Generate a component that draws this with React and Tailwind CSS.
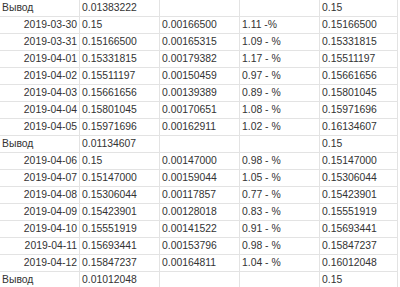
const rows = [
  ['Вывод', '0.01383222', '', '', '0.15', true],
  ['2019-03-30', '0.15', '0.00166500', '1.11 -%', '0.15166500'],
  ['2019-03-31', '0.15166500', '0.00165315', '1.09 - %', '0.15331815'],
  ['2019-04-01', '0.15331815', '0.00179382', '1.17 - %', '0.15511197'],
  ['2019-04-02', '0.15511197', '0.00150459', '0.97 - %', '0.15661656'],
  ['2019-04-03', '0.15661656', '0.00139389', '0.89 - %', '0.15801045'],
  ['2019-04-04', '0.15801045', '0.00170651', '1.08 - %', '0.15971696'],
  ['2019-04-05', '0.15971696', '0.00162911', '1.02 - %', '0.16134607'],
  ['Вывод', '0.01134607', '', '', '0.15', true],
  ['2019-04-06', '0.15', '0.00147000', '0.98 - %', '0.15147000'],
  ['2019-04-07', '0.15147000', '0.00159044', '1.05 - %', '0.15306044'],
  ['2019-04-08', '0.15306044', '0.00117857', '0.77 - %', '0.15423901'],
  ['2019-04-09', '0.15423901', '0.00128018', '0.83 - %', '0.15551919'],
  ['2019-04-10', '0.15551919', '0.00141522', '0.91 - %', '0.15693441'],
  ['2019-04-11', '0.15693441', '0.00153796', '0.98 - %', '0.15847237'],
  ['2019-04-12', '0.15847237', '0.00164811', '1.04 - %', '0.16012048'],
  ['Вывод', '0.01012048', '', '', '0.15', true],
];

const cell = 'h-[17px] border-r border-b border-[#e3e3e3] px-[2px] flex items-center whitespace-nowrap overflow-hidden';

export default function App() {
  return (
    <div
      className="w-[400px] h-[287px] overflow-hidden bg-white text-[#333] text-[10.4px] leading-none"
      style={{ fontFamily: '"Liberation Sans", Arial, sans-serif' }}
    >
      <div className="grid grid-cols-[80px_80px_80px_80px_78px]">
        {rows.map(([a, b, c, d, e, total], i) => (
          <div key={i} className="contents">
            <div className={`${cell} ${total ? 'justify-start' : 'justify-end'}`}>{a}</div>
            <div className={cell}>{b}</div>
            <div className={cell}>{c}</div>
            <div className={cell}>{d}</div>
            <div className={cell}>{e}</div>
          </div>
        ))}
      </div>
    </div>
  );
}
